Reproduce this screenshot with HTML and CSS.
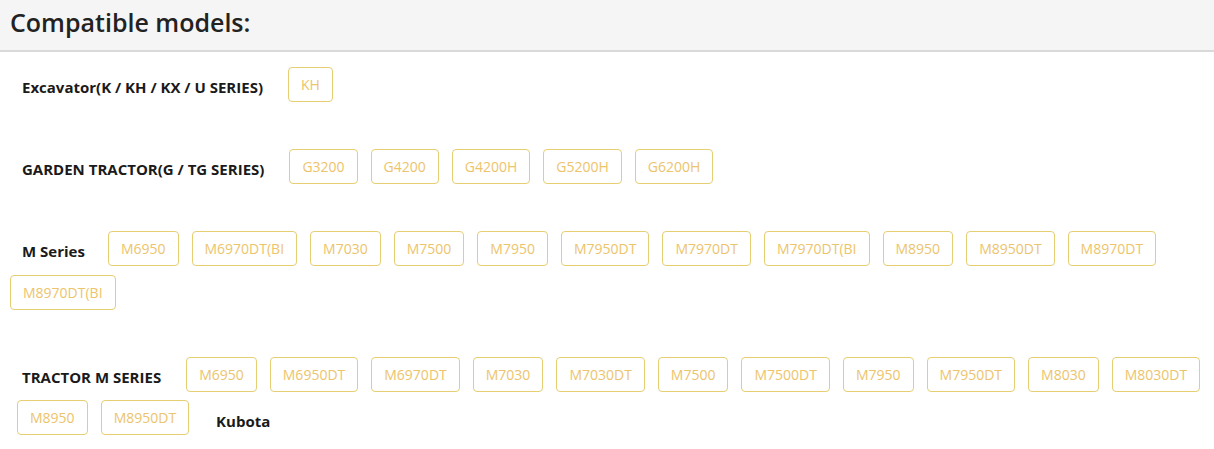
FILE: index.html
```html
<!DOCTYPE html>
<html lang="en">
<head>
    <meta charset="UTF-8">
    <title>Compatible models</title>
    <link rel="stylesheet" href="styles.css">
</head>
<body>
    <div class="head">
        <h2>Compatible models:</h2>
    </div>

    <div class="models">
        <div class="row row-exc">
            <span class="label">Excavator(K / KH / KX / U SERIES)</span>
            <span class="tag">KH</span>
        </div>

        <div class="row row-garden">
            <span class="label">GARDEN TRACTOR(G / TG SERIES)</span>
            <span class="tag">G3200</span>
            <span class="tag">G4200</span>
            <span class="tag">G4200H</span>
            <span class="tag">G5200H</span>
            <span class="tag">G6200H</span>
        </div>

        <div class="row row-m">
            <span class="label">M Series</span>
            <span class="tag">M6950</span>
            <span class="tag">M6970DT(BI</span>
            <span class="tag">M7030</span>
            <span class="tag">M7500</span>
            <span class="tag">M7950</span>
            <span class="tag">M7950DT</span>
            <span class="tag">M7970DT</span>
            <span class="tag">M7970DT(BI</span>
            <span class="tag">M8950</span>
            <span class="tag">M8950DT</span>
            <span class="tag">M8970DT</span>
            <span class="tag">M8970DT(BI</span>
        </div>

        <div class="row row-tractor">
            <span class="label">TRACTOR M SERIES</span>
            <span class="tag">M6950</span>
            <span class="tag">M6950DT</span>
            <span class="tag">M6970DT</span>
            <span class="tag">M7030</span>
            <span class="tag">M7030DT</span>
            <span class="tag">M7500</span>
            <span class="tag">M7500DT</span>
            <span class="tag">M7950</span>
            <span class="tag">M7950DT</span>
            <span class="tag">M8030</span>
            <span class="tag">M8030DT</span>
            <span class="tag">M8950</span>
            <span class="tag">M8950DT</span>
            <span class="label brand">Kubota</span>
        </div>
    </div>
</body>
</html>
```

FILE: styles.css
```css
*{
    margin: 0;
    padding: 0;
    box-sizing: border-box;
}

body{
    font-family: "Open Sans", "Noto Sans", Arial, sans-serif;
    color: #222;
    background-color: #fff;
}

/*顶部标题栏*/
.head{
    height: 52px;
    background-color: #f5f5f5;
    border-bottom: 2px solid #d9d9d9;
    padding-left: 10px;
}

.head h2{
    font-size: 25px;
    font-weight: 600;
    line-height: 44px;
    color: #222;
}

.models{
    padding-top: 15px;
}

/*每一行：标题 + 型号标签，超出自动换行*/
.row{
    display: flex;
    flex-wrap: wrap;
    align-items: flex-start;
    column-gap: 13px;
    row-gap: 9px;
    margin-bottom: 47px;
}

.row:last-child{
    margin-bottom: 0;
}

.label{
    font-size: 15px;
    font-weight: 700;
    line-height: 20px;
    padding-top: 10px;
    margin-right: 12px;
    color: #1a1a1a;
}

.tag{
    display: inline-block;
    height: 35px;
    line-height: 33px;
    padding: 0 12px;
    font-size: 14px;
    color: #ecc46c;
    border: 1px solid #e6cf73;
    border-radius: 4px;
    white-space: nowrap;
}

.row-exc,
.row-garden{
    padding-left: 22px;
}

.row-m{
    padding-left: 10px;
}

.row-m .label{
    margin-left: 12px;
    margin-right: 10px;
}

.row-tractor{
    padding-left: 17px;
    row-gap: 8px;
}

.row-tractor .label{
    margin-left: 5px;
}

.row-tractor .brand{
    margin-left: 14px;
    padding-top: 11px;
}
```
